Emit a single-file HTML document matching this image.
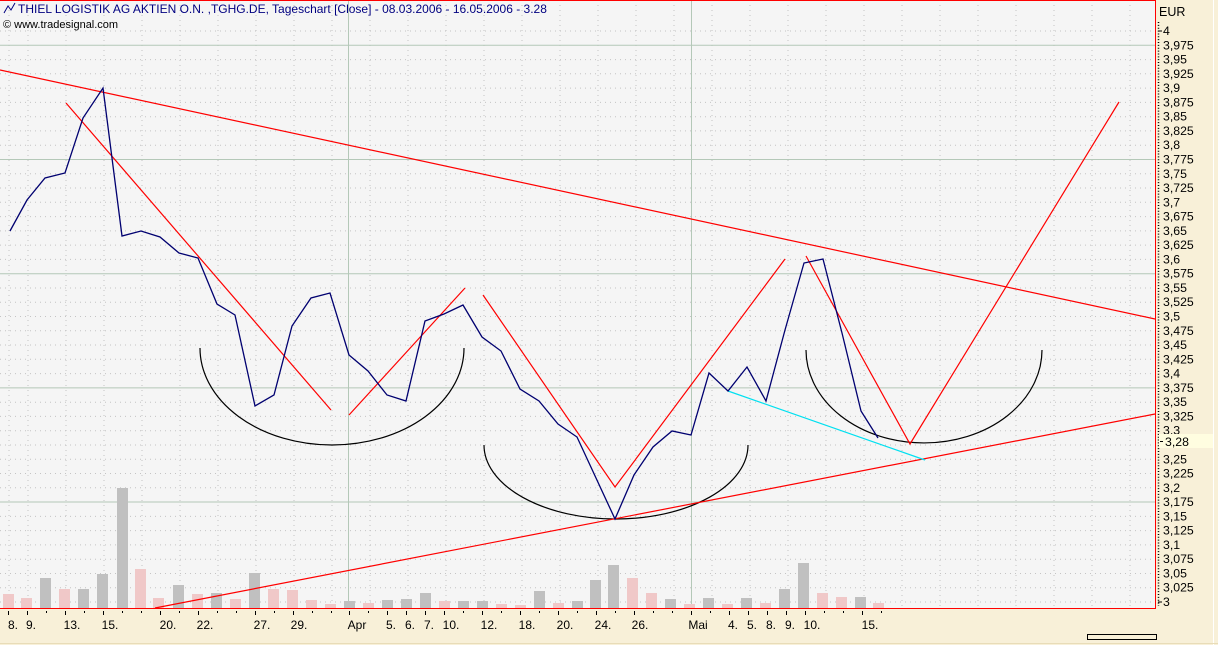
<!DOCTYPE html>
<html><head><meta charset="utf-8"><style>
html,body{margin:0;padding:0;background:#f8f0d8;}
svg{display:block;font-family:"Liberation Sans",sans-serif;}
</style></head><body>
<svg width="1218" height="645" viewBox="0 0 1218 645" xmlns="http://www.w3.org/2000/svg">
<rect x="0" y="0" width="1218" height="645" fill="#f8f0d8"/>
<rect x="0" y="0" width="1155" height="609" fill="#f5f5f5"/>
<!-- horizontal dotted -->
<g stroke="#c4c4c4" stroke-dasharray="1,4">
<line x1="0" y1="31" x2="1155" y2="31"/><line x1="0" y1="59.6" x2="1155" y2="59.6"/><line x1="0" y1="73.8" x2="1155" y2="73.8"/><line x1="0" y1="88.1" x2="1155" y2="88.1"/><line x1="0" y1="102.4" x2="1155" y2="102.4"/><line x1="0" y1="116.7" x2="1155" y2="116.7"/><line x1="0" y1="130.9" x2="1155" y2="130.9"/><line x1="0" y1="145.2" x2="1155" y2="145.2"/><line x1="0" y1="173.8" x2="1155" y2="173.8"/><line x1="0" y1="188" x2="1155" y2="188"/><line x1="0" y1="202.3" x2="1155" y2="202.3"/><line x1="0" y1="216.6" x2="1155" y2="216.6"/><line x1="0" y1="230.9" x2="1155" y2="230.9"/><line x1="0" y1="245.1" x2="1155" y2="245.1"/><line x1="0" y1="259.4" x2="1155" y2="259.4"/><line x1="0" y1="288" x2="1155" y2="288"/><line x1="0" y1="302.2" x2="1155" y2="302.2"/><line x1="0" y1="316.5" x2="1155" y2="316.5"/><line x1="0" y1="330.8" x2="1155" y2="330.8"/><line x1="0" y1="345" x2="1155" y2="345"/><line x1="0" y1="359.3" x2="1155" y2="359.3"/><line x1="0" y1="373.6" x2="1155" y2="373.6"/><line x1="0" y1="402.2" x2="1155" y2="402.2"/><line x1="0" y1="416.4" x2="1155" y2="416.4"/><line x1="0" y1="430.7" x2="1155" y2="430.7"/><line x1="0" y1="445" x2="1155" y2="445"/><line x1="0" y1="459.3" x2="1155" y2="459.3"/><line x1="0" y1="473.5" x2="1155" y2="473.5"/><line x1="0" y1="487.8" x2="1155" y2="487.8"/><line x1="0" y1="516.4" x2="1155" y2="516.4"/><line x1="0" y1="530.6" x2="1155" y2="530.6"/><line x1="0" y1="544.9" x2="1155" y2="544.9"/><line x1="0" y1="559.2" x2="1155" y2="559.2"/><line x1="0" y1="573.5" x2="1155" y2="573.5"/><line x1="0" y1="587.7" x2="1155" y2="587.7"/><line x1="0" y1="602" x2="1155" y2="602"/>
</g>
<!-- vertical dotted -->
<g stroke="#c4c4c4" stroke-dasharray="1,4">
<line x1="9" y1="0" x2="9" y2="608"/><line x1="28" y1="0" x2="28" y2="608"/><line x1="66" y1="0" x2="66" y2="608"/><line x1="104" y1="0" x2="104" y2="608"/><line x1="142" y1="0" x2="142" y2="608"/><line x1="180" y1="0" x2="180" y2="608"/><line x1="218" y1="0" x2="218" y2="608"/><line x1="256" y1="0" x2="256" y2="608"/><line x1="294" y1="0" x2="294" y2="608"/><line x1="332" y1="0" x2="332" y2="608"/><line x1="370" y1="0" x2="370" y2="608"/><line x1="408" y1="0" x2="408" y2="608"/><line x1="446" y1="0" x2="446" y2="608"/><line x1="484" y1="0" x2="484" y2="608"/><line x1="522" y1="0" x2="522" y2="608"/><line x1="560" y1="0" x2="560" y2="608"/><line x1="598" y1="0" x2="598" y2="608"/><line x1="636" y1="0" x2="636" y2="608"/><line x1="674" y1="0" x2="674" y2="608"/><line x1="712" y1="0" x2="712" y2="608"/><line x1="750" y1="0" x2="750" y2="608"/><line x1="788" y1="0" x2="788" y2="608"/><line x1="826" y1="0" x2="826" y2="608"/><line x1="864" y1="0" x2="864" y2="608"/><line x1="902" y1="0" x2="902" y2="608"/><line x1="940" y1="0" x2="940" y2="608"/><line x1="978" y1="0" x2="978" y2="608"/><line x1="1016" y1="0" x2="1016" y2="608"/><line x1="1054" y1="0" x2="1054" y2="608"/><line x1="1092" y1="0" x2="1092" y2="608"/><line x1="1130" y1="0" x2="1130" y2="608"/>
</g>
<!-- solid grid -->
<g stroke="#b4c8b8" stroke-width="1">
<line x1="0" y1="45.3" x2="1155" y2="45.3"/><line x1="0" y1="159.5" x2="1155" y2="159.5"/><line x1="0" y1="273.7" x2="1155" y2="273.7"/><line x1="0" y1="387.9" x2="1155" y2="387.9"/><line x1="0" y1="502" x2="1155" y2="502"/>
<line x1="348.5" y1="0" x2="348.5" y2="608"/><line x1="691.5" y1="0" x2="691.5" y2="608"/>
</g>
<!-- volume bars -->
<g>
<rect x="3" y="594" width="11" height="14" fill="#f0c8c8"/><rect x="21" y="598" width="11" height="10" fill="#f0c8c8"/><rect x="40" y="578" width="11" height="30" fill="#c0c0c0"/><rect x="59" y="589" width="11" height="19" fill="#f0c8c8"/><rect x="78" y="589" width="11" height="19" fill="#c0c0c0"/><rect x="97" y="574" width="11" height="34" fill="#c0c0c0"/><rect x="117" y="488" width="11" height="120" fill="#c0c0c0"/><rect x="135" y="569" width="11" height="39" fill="#f0c8c8"/><rect x="153" y="598" width="11" height="10" fill="#f0c8c8"/><rect x="173" y="585" width="11" height="23" fill="#c0c0c0"/><rect x="192" y="594" width="11" height="14" fill="#f0c8c8"/><rect x="211" y="593" width="11" height="15" fill="#c0c0c0"/><rect x="230" y="599" width="11" height="9" fill="#f0c8c8"/><rect x="249" y="573" width="11" height="35" fill="#c0c0c0"/><rect x="268" y="589" width="11" height="19" fill="#f0c8c8"/><rect x="287" y="590" width="11" height="18" fill="#f0c8c8"/><rect x="306" y="600" width="11" height="8" fill="#f0c8c8"/><rect x="325" y="604" width="11" height="4" fill="#f0c8c8"/><rect x="344" y="601" width="11" height="7" fill="#c0c0c0"/><rect x="363" y="603" width="11" height="5" fill="#f0c8c8"/><rect x="382" y="600" width="11" height="8" fill="#c0c0c0"/><rect x="401" y="599" width="11" height="9" fill="#c0c0c0"/><rect x="420" y="593" width="11" height="15" fill="#c0c0c0"/><rect x="439" y="601" width="11" height="7" fill="#f0c8c8"/><rect x="458" y="601" width="11" height="7" fill="#c0c0c0"/><rect x="477" y="601" width="11" height="7" fill="#c0c0c0"/><rect x="496" y="604" width="11" height="4" fill="#f0c8c8"/><rect x="515" y="605" width="11" height="3" fill="#f0c8c8"/><rect x="534" y="591" width="11" height="17" fill="#c0c0c0"/><rect x="553" y="603" width="11" height="5" fill="#f0c8c8"/><rect x="572" y="601" width="11" height="7" fill="#c0c0c0"/><rect x="590" y="580" width="11" height="28" fill="#c0c0c0"/><rect x="608" y="565" width="11" height="43" fill="#c0c0c0"/><rect x="627" y="578" width="11" height="30" fill="#f0c8c8"/><rect x="646" y="593" width="11" height="15" fill="#f0c8c8"/><rect x="665" y="599" width="11" height="9" fill="#c0c0c0"/><rect x="684" y="604" width="11" height="4" fill="#f0c8c8"/><rect x="703" y="598" width="11" height="10" fill="#c0c0c0"/><rect x="722" y="604" width="11" height="4" fill="#f0c8c8"/><rect x="741" y="598" width="11" height="10" fill="#c0c0c0"/><rect x="760" y="603" width="11" height="5" fill="#f0c8c8"/><rect x="779" y="589" width="11" height="19" fill="#c0c0c0"/><rect x="798" y="563" width="11" height="45" fill="#c0c0c0"/><rect x="817" y="593" width="11" height="15" fill="#f0c8c8"/><rect x="836" y="597" width="11" height="11" fill="#f0c8c8"/><rect x="855" y="597" width="11" height="11" fill="#c0c0c0"/><rect x="873" y="603" width="11" height="5" fill="#f0c8c8"/>
</g>
<!-- arcs -->
<g fill="none" stroke="#000" stroke-width="1.2">
<path d="M200,348 A132,97 0 0 0 464,348"/>
<path d="M484,445 A132,74 0 0 0 748,445"/>
<path d="M806,350 A118,93 0 0 0 1042,350"/>
</g>
<!-- red lines -->
<g fill="none" stroke="#ff0000" stroke-width="1.2">
<line x1="0" y1="70" x2="1155" y2="319"/>
<line x1="155" y1="608" x2="1155" y2="414"/>
<line x1="66" y1="103" x2="331" y2="410"/>
<line x1="349" y1="415" x2="465" y2="288"/>
<polyline points="483,295 615,487 785,259"/>
<polyline points="806,256 910,444 1119,102"/>
</g>
<line x1="728" y1="391" x2="925" y2="460" stroke="#00e0f0" stroke-width="1.2"/>
<!-- price -->
<polyline fill="none" stroke="#000070" stroke-width="1.3" points="10,231 27,200 45,178 65,173 83,118 103,88 122,236 141,231 160,237 179,253 198,258 217,304 235,315 255,406 274,395 292,326 311,298 330,293 349,355 368,371 387,395 406,401 425,321 444,314 463,305 482,337 501,351 520,389 539,401 558,424 577,437 615,519 634,475 653,447 672,431 691,435 709,373 728,391 747,367 766,401 785,330 804,263 823,259 842,333 861,411 878,438"/>
<!-- borders -->
<line x1="0" y1="0.5" x2="1156" y2="0.5" stroke="#ff0000"/>
<line x1="1155.5" y1="0" x2="1155.5" y2="609" stroke="#ff0000"/>
<line x1="0" y1="608.5" x2="1156" y2="608.5" stroke="#ff0000"/>
<rect x="1156" y="0" width="62" height="645" fill="#f8f0d8"/>
<line x1="1213.5" y1="0" x2="1213.5" y2="645" stroke="#ffffff"/>
<!-- header -->
<polyline points="4,13 8,6 11,10 15,3" fill="none" stroke="#000080" stroke-width="1"/>
<text x="18" y="13" font-size="12" fill="#000080">THIEL LOGISTIK AG AKTIEN O.N. ,TGHG.DE, Tageschart [Close] - 08.03.2006 - 16.05.2006 - 3.28</text>
<text x="3" y="28" font-size="11" fill="#000">© www.tradesignal.com</text>
<!-- right axis -->
<text x="1159" y="16" font-size="12.5">EUR</text>
<line x1="1158.5" y1="22" x2="1158.5" y2="606" stroke="#000" stroke-width="1.5" stroke-dasharray="1,1.86"/>
<g font-size="12.3" fill="#000">
<text x="1163" y="35">4</text><text x="1163" y="49.3">3,975</text><text x="1163" y="63.6">3,95</text><text x="1163" y="77.8">3,925</text><text x="1163" y="92.1">3,9</text><text x="1163" y="106.4">3,875</text><text x="1163" y="120.7">3,85</text><text x="1163" y="134.9">3,825</text><text x="1163" y="149.2">3,8</text><text x="1163" y="163.5">3,775</text><text x="1163" y="177.8">3,75</text><text x="1163" y="192">3,725</text><text x="1163" y="206.3">3,7</text><text x="1163" y="220.6">3,675</text><text x="1163" y="234.9">3,65</text><text x="1163" y="249.1">3,625</text><text x="1163" y="263.4">3,6</text><text x="1163" y="277.7">3,575</text><text x="1163" y="292">3,55</text><text x="1163" y="306.2">3,525</text><text x="1163" y="320.5">3,5</text><text x="1163" y="334.8">3,475</text><text x="1163" y="349">3,45</text><text x="1163" y="363.3">3,425</text><text x="1163" y="377.6">3,4</text><text x="1163" y="391.9">3,375</text><text x="1163" y="406.2">3,35</text><text x="1163" y="420.4">3,325</text><text x="1163" y="434.7">3,3</text><text x="1163" y="463.3">3,25</text><text x="1163" y="477.5">3,225</text><text x="1163" y="491.8">3,2</text><text x="1163" y="506">3,175</text><text x="1163" y="520.4">3,15</text><text x="1163" y="534.6">3,125</text><text x="1163" y="548.9">3,1</text><text x="1163" y="563.2">3,075</text><text x="1163" y="577.5">3,05</text><text x="1163" y="591.7">3,025</text><text x="1163" y="606">3</text>
</g>
<g stroke="#000">
<line x1="1158" y1="31" x2="1162" y2="31"/><line x1="1158" y1="602" x2="1162" y2="602"/>
</g>
<rect x="1159" y="434" width="54" height="14" fill="#fffde0"/>
<line x1="1160" y1="441.5" x2="1163" y2="441.5" stroke="#000"/>
<text x="1165" y="446" font-size="12.3">3,28</text>
<!-- bottom axis -->
<g stroke="#000">
<line x1="8.5" y1="611" x2="8.5" y2="615"/><line x1="27.5" y1="611" x2="27.5" y2="615"/><line x1="46.5" y1="611" x2="46.5" y2="613"/><line x1="65.5" y1="611" x2="65.5" y2="615"/><line x1="84.5" y1="611" x2="84.5" y2="613"/><line x1="103.5" y1="611" x2="103.5" y2="615"/><line x1="122.5" y1="611" x2="122.5" y2="613"/><line x1="141.5" y1="611" x2="141.5" y2="613"/><line x1="160.5" y1="611" x2="160.5" y2="615"/><line x1="179.5" y1="611" x2="179.5" y2="613"/><line x1="198.5" y1="611" x2="198.5" y2="615"/><line x1="217.5" y1="611" x2="217.5" y2="613"/><line x1="236.5" y1="611" x2="236.5" y2="613"/><line x1="255.5" y1="611" x2="255.5" y2="615"/><line x1="274.5" y1="611" x2="274.5" y2="613"/><line x1="293.5" y1="611" x2="293.5" y2="615"/><line x1="312.5" y1="611" x2="312.5" y2="613"/><line x1="331.5" y1="611" x2="331.5" y2="613"/><line x1="349.5" y1="611" x2="349.5" y2="615"/><line x1="368.5" y1="611" x2="368.5" y2="613"/><line x1="387.5" y1="611" x2="387.5" y2="615"/><line x1="406.5" y1="611" x2="406.5" y2="615"/><line x1="425.5" y1="611" x2="425.5" y2="615"/><line x1="444.5" y1="611" x2="444.5" y2="615"/><line x1="463.5" y1="611" x2="463.5" y2="613"/><line x1="482.5" y1="611" x2="482.5" y2="615"/><line x1="501.5" y1="611" x2="501.5" y2="613"/><line x1="520.5" y1="611" x2="520.5" y2="615"/><line x1="539.5" y1="611" x2="539.5" y2="613"/><line x1="558.5" y1="611" x2="558.5" y2="615"/><line x1="577.5" y1="611" x2="577.5" y2="613"/><line x1="596.5" y1="611" x2="596.5" y2="615"/><line x1="615.5" y1="611" x2="615.5" y2="613"/><line x1="634.5" y1="611" x2="634.5" y2="615"/><line x1="653.5" y1="611" x2="653.5" y2="613"/><line x1="672.5" y1="611" x2="672.5" y2="613"/><line x1="691.5" y1="611" x2="691.5" y2="615"/><line x1="710.5" y1="611" x2="710.5" y2="613"/><line x1="729.5" y1="611" x2="729.5" y2="615"/><line x1="748.5" y1="611" x2="748.5" y2="615"/><line x1="767.5" y1="611" x2="767.5" y2="615"/><line x1="786.5" y1="611" x2="786.5" y2="615"/><line x1="805.5" y1="611" x2="805.5" y2="615"/><line x1="824.5" y1="611" x2="824.5" y2="613"/><line x1="843.5" y1="611" x2="843.5" y2="613"/><line x1="862.5" y1="611" x2="862.5" y2="615"/><line x1="881.5" y1="611" x2="881.5" y2="613"/>
</g>
<g font-size="12" fill="#000" text-anchor="middle">
<text x="13" y="629">8.</text><text x="31" y="629">9.</text><text x="72" y="629">13.</text><text x="110" y="629">15.</text><text x="168" y="629">20.</text><text x="205" y="629">22.</text><text x="262" y="629">27.</text><text x="299" y="629">29.</text><text x="357" y="629">Apr</text><text x="391" y="629">5.</text><text x="410" y="629">6.</text><text x="429" y="629">7.</text><text x="451" y="629">10.</text><text x="489" y="629">12.</text><text x="527" y="629">18.</text><text x="565" y="629">20.</text><text x="603" y="629">24.</text><text x="640" y="629">26.</text><text x="698" y="629">Mai</text><text x="733" y="629">4.</text><text x="752" y="629">5.</text><text x="771" y="629">8.</text><text x="790" y="629">9.</text><text x="812" y="629">10.</text><text x="870" y="629">15.</text>
</g>
<rect x="1087.5" y="634.5" width="69" height="5" fill="#f8f0d8" stroke="#000"/>
<line x1="0" y1="643.5" x2="1218" y2="643.5" stroke="#e8dcb8"/>
</svg>
</body></html>
